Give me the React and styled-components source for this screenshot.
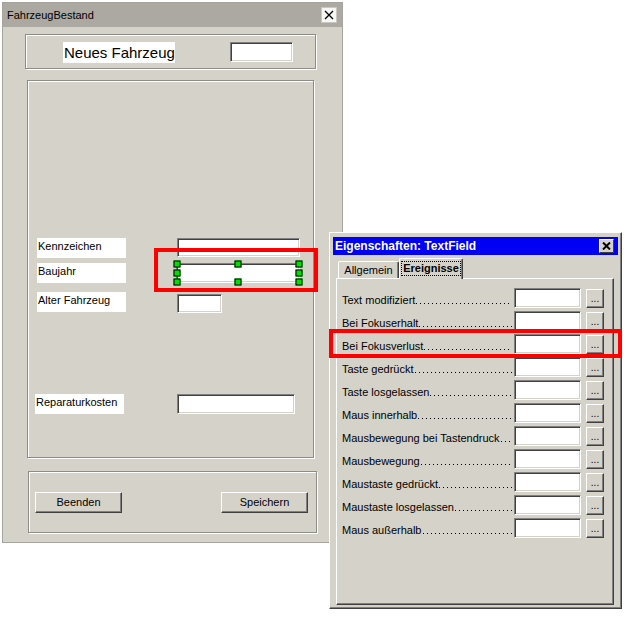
import React from "react";
import styled, { createGlobalStyle } from "styled-components";

const Global = createGlobalStyle`
  html, body { margin: 0; padding: 0; background: #fff; }
  body { font-family: "Liberation Sans", Arial, sans-serif; font-size: 11px; color: #000; }
  * { box-sizing: border-box; }
`;

const FACE = "#d5d2ca";

const Stage = styled.div`
  position: relative;
  width: 634px;
  height: 623px;
  overflow: hidden;
  background: #fff;
  padding: 2px;
`;

const MainWindow = styled.div`
  width: 341px;
  height: 541px;
  border: 1px solid #a6a49c;
  background: ${FACE};
  display: flex;
  flex-direction: column;
`;

const TitleBar = styled.div`
  height: 24px;
  flex: none;
  background: #aba9a1;
  display: flex;
  align-items: center;
  justify-content: space-between;
  padding: 0 5px 0 4px;
  font-size: 11px;
`;

const CloseBox = styled.div`
  width: 16px;
  height: 16px;
  background: #f6f6f4;
  border: 1px solid #c9c7c0;
  display: flex;
  align-items: center;
  justify-content: center;
`;

const GroupBox = styled.div`
  flex: none;
  margin: ${(p) => p.$mt}px 0 0 ${(p) => p.$ml}px;
  width: ${(p) => p.$w}px;
  height: ${(p) => p.$h}px;
  border: 1px solid #8e8c86;
  box-shadow: 1px 1px 0 #fff, inset 1px 1px 0 #fff;
`;

const HeaderRow = styled.div`
  display: flex;
  align-items: flex-start;
  padding: 7px 0 0 37px;
`;

const BigLabel = styled.div`
  width: 112px;
  height: 21px;
  background: #fff;
  font-size: 15px;
  line-height: 21px;
  padding-left: 1px;
  white-space: nowrap;
`;

const Sunken = styled.div`
  position: relative;
  flex: none;
  width: ${(p) => p.$w}px;
  height: ${(p) => p.$h}px;
  margin-left: ${(p) => p.$ml || 0}px;
  margin-top: ${(p) => p.$mt || 0}px;
  background: #fff;
  border-top: 1px solid #808080;
  border-left: 1px solid #808080;
  border-right: 1px solid #fff;
  border-bottom: 1px solid #fff;
  box-shadow: inset 1px 1px 0 #404040, inset -1px -1px 0 #d5d2ca;
`;

const Handle = styled.span`
  position: absolute;
  left: ${(p) => p.$x}%;
  top: ${(p) => p.$y}%;
  width: 7px;
  height: 7px;
  transform: translate(-50%, -50%);
  background: #00e000;
  border: 1px solid #000;
`;

const FormRow = styled.div`
  display: flex;
  align-items: flex-start;
  margin-top: ${(p) => p.$mt}px;
  padding-left: ${(p) => p.$pl}px;
`;

const FormLabel = styled.div`
  flex: none;
  width: 89px;
  height: 20px;
  background: #fff;
  font-size: 11px;
  line-height: 16px;
  padding-left: 1px;
  white-space: nowrap;
`;

const ButtonBar = styled.div`
  height: 100%;
  display: flex;
  align-items: center;
  justify-content: space-between;
  padding: 0 8px 0 6px;
`;

const PushButton = styled.button`
  width: 87px;
  height: 21px;
  padding: 0;
  background: ${FACE};
  border-top: 1px solid #fff;
  border-left: 1px solid #fff;
  border-right: 1px solid #404040;
  border-bottom: 1px solid #404040;
  box-shadow: inset -1px -1px 0 #808080;
  font-family: "Liberation Sans", Arial, sans-serif;
  font-size: 11px;
  color: #000;
`;

/* ---------- properties dialog ---------- */

const Dialog = styled.div`
  position: absolute;
  left: 329px;
  top: 232px;
  width: 293px;
  height: 377px;
  background: ${FACE};
  border-top: 1px solid #fff;
  border-left: 1px solid #fff;
  border-right: 1px solid #404040;
  border-bottom: 1px solid #404040;
  box-shadow: inset -1px -1px 0 #808080;
  padding: 4px 3px 3px 3px;
  display: flex;
  flex-direction: column;
`;

const DialogTitle = styled.div`
  flex: none;
  height: 18px;
  background: #0000f4;
  color: #fff;
  font-weight: bold;
  font-size: 12px;
  display: flex;
  align-items: center;
  justify-content: space-between;
  padding: 0 4px 0 2px;
`;

const DialogClose = styled.div`
  width: 15px;
  height: 14px;
  background: ${FACE};
  border-top: 1px solid #fff;
  border-left: 1px solid #fff;
  border-right: 1px solid #404040;
  border-bottom: 1px solid #404040;
  display: flex;
  align-items: center;
  justify-content: center;
`;

const TabBar = styled.div`
  flex: none;
  height: 20px;
  margin-top: 3px;
  padding-left: 5px;
  display: flex;
  align-items: flex-end;
`;

const Tab = styled.div`
  position: relative;
  z-index: ${(p) => (p.$active ? 2 : 1)};
  width: ${(p) => (p.$active ? 64 : 61)}px;
  height: ${(p) => (p.$active ? 21 : 17)}px;
  margin-bottom: ${(p) => (p.$active ? -1 : 0)}px;
  background: ${FACE};
  border-top: 1px solid #fff;
  border-left: 1px solid #fff;
  border-right: 1px solid #404040;
  border-top-left-radius: 2px;
  border-top-right-radius: 2px;
  box-shadow: inset -1px 0 0 #808080;
  font-weight: ${(p) => (p.$active ? "bold" : "normal")};
  font-size: 11px;
  display: flex;
  align-items: center;
  justify-content: center;
  padding-bottom: ${(p) => (p.$active ? 2 : 0)}px;
`;

const FocusText = styled.span`
  outline: 1px dotted #000;
  outline-offset: 0px;
  padding: 0 1px;
  line-height: 13px;
`;

const TabPage = styled.div`
  flex: 1;
  margin: 0 4px 0 3px;
  border-top: 1px solid #fff;
  border-left: 1px solid #fff;
  border-right: 1px solid #404040;
  border-bottom: 1px solid #404040;
  box-shadow: inset -1px -1px 0 #808080;
  padding: 9px 0 0 5px;
  display: flex;
  flex-direction: column;
  gap: 3px;
`;

const EventRow = styled.div`
  display: flex;
  align-items: center;
  height: 20px;
`;

const EventLabel = styled.div`
  flex: none;
  width: 170px;
  margin-right: 2px;
  display: flex;
  align-items: flex-end;
  white-space: nowrap;
  padding-top: 3px;
  font-size: 11px;
`;

const Leader = styled.span`
  flex: 1 1 0;
  min-width: 0;
  height: 13px;
  margin-left: 1px;
  background-image: linear-gradient(to right, #000 1px, transparent 1px);
  background-size: 4px 1px;
  background-repeat: repeat-x;
  background-position: 0 10px;
`;

const DotButton = styled.div`
  flex: none;
  width: 18px;
  height: 19px;
  margin-left: 5px;
  background: ${FACE};
  border-top: 1px solid #fff;
  border-left: 1px solid #fff;
  border-right: 1px solid #404040;
  border-bottom: 1px solid #404040;
  box-shadow: inset -1px -1px 0 #808080;
  font-size: 10px;
  line-height: 10px;
  text-align: center;
  padding-top: 4px;
`;

const Highlight = styled.div`
  position: absolute;
  left: ${(p) => p.$x}px;
  top: ${(p) => p.$y}px;
  width: ${(p) => p.$w}px;
  height: ${(p) => p.$h}px;
  border: 4px solid #ff0000;
  z-index: 10;
  pointer-events: none;
`;

const events = [
  "Text modifiziert",
  "Bei Fokuserhalt",
  "Bei Fokusverlust",
  "Taste gedrückt",
  "Taste losgelassen",
  "Maus innerhalb",
  "Mausbewegung bei Tastendruck",
  "Mausbewegung",
  "Maustaste gedrückt",
  "Maustaste losgelassen",
  "Maus außerhalb",
];

export default function App() {
  return (
    <Stage>
      <Global />
      <MainWindow>
        <TitleBar>
          <span>FahrzeugBestand</span>
          <CloseBox>
            <svg width="10" height="10" viewBox="0 0 10 10">
              <path d="M1 1L9 9M9 1L1 9" stroke="#000" strokeWidth="1.3" />
            </svg>
          </CloseBox>
        </TitleBar>

        <GroupBox $mt={7} $ml={22} $w={291} $h={35}>
          <HeaderRow>
            <BigLabel>Neues Fahrzeug</BigLabel>
            <Sunken $w={63} $h={20} $ml={55} />
          </HeaderRow>
        </GroupBox>

        <GroupBox $mt={11} $ml={24} $w={287} $h={378}>
          <FormRow $mt={157} $pl={9}>
            <FormLabel>Kennzeichen</FormLabel>
            <Sunken $w={123} $h={19} $ml={51} />
          </FormRow>
          <FormRow $mt={5} $pl={9}>
            <FormLabel>Baujahr</FormLabel>
            <Sunken $w={124} $h={20} $ml={50}>
              {[0, 50, 100].map((x) =>
                [0, 50, 100].map((y) =>
                  x === 50 && y === 50 ? null : <Handle key={`${x}-${y}`} $x={x} $y={y} />
                )
              )}
            </Sunken>
          </FormRow>
          <FormRow $mt={9} $pl={9}>
            <FormLabel>Alter Fahrzeug</FormLabel>
            <Sunken $w={45} $h={19} $ml={51} $mt={2} />
          </FormRow>
          <FormRow $mt={81} $pl={7}>
            <FormLabel>Reparaturkosten</FormLabel>
            <Sunken $w={118} $h={20} $ml={53} />
          </FormRow>
        </GroupBox>

        <GroupBox $mt={13} $ml={25} $w={289} $h={62}>
          <ButtonBar>
            <PushButton>Beenden</PushButton>
            <PushButton>Speichern</PushButton>
          </ButtonBar>
        </GroupBox>
      </MainWindow>

      <Dialog>
        <DialogTitle>
          <span>Eigenschaften: TextField</span>
          <DialogClose>
            <svg width="9" height="8" viewBox="0 0 9 8">
              <path d="M1 0.5L8 7.5M8 0.5L1 7.5" stroke="#000" strokeWidth="2" />
            </svg>
          </DialogClose>
        </DialogTitle>
        <TabBar>
          <Tab>Allgemein</Tab>
          <Tab $active>
            <FocusText>Ereignisse</FocusText>
          </Tab>
        </TabBar>
        <TabPage>
          {events.map((e) => (
            <EventRow key={e}>
              <EventLabel>
                <span>{e}</span>
                <Leader />
              </EventLabel>
              <Sunken $w={67} $h={20} />
              <DotButton>...</DotButton>
            </EventRow>
          ))}
        </TabPage>
      </Dialog>

      <Highlight $x={154} $y={248} $w={164} $h={44} />
      <Highlight $x={329} $y={329} $w={293} $h={29} />
    </Stage>
  );
}
